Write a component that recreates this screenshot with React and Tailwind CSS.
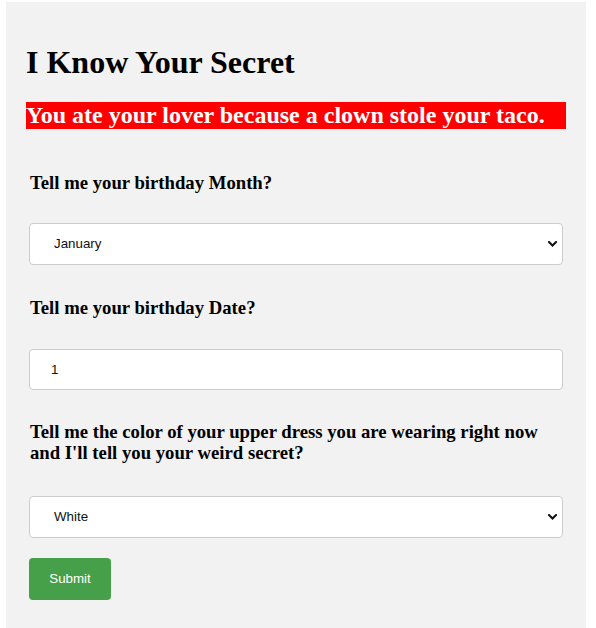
import { useState } from 'react';

const serif = { fontFamily: '"Liberation Serif", "Times New Roman", serif' };

const Chevron = () => (
    <svg className="pointer-events-none absolute right-[6px] top-1/2 -translate-y-1/2 w-[9px] h-[6px]" viewBox="0 0 9 6" fill="none">
        <path d="M1 1l3.5 3.5L8 1" stroke="#111" strokeWidth="2" strokeLinecap="square" />
    </svg>
);

const SelectBox = ({ value, onChange, options }) => (
    <div className="relative mx-[3px]">
        <select
            value={value}
            onChange={e => onChange(e.target.value)}
            className="appearance-none block w-full h-[42px] pl-[24px] pr-8 bg-white border border-[#cccccc] rounded-[4px] text-[13.33px] text-[#111] font-['Liberation_Sans',Arial,sans-serif] outline-none"
        >
            {options.map(o => <option key={o} value={o}>{o}</option>)}
        </select>
        <Chevron />
    </div>
);

const months = ['January', 'February', 'March', 'April', 'May', 'June', 'July', 'August', 'September', 'October', 'November', 'December'];
const colors = ['White', 'Black', 'Red', 'Blue', 'Green', 'Yellow', 'Gray'];

export default function App() {
    const [month, setMonth] = useState('January');
    const [date, setDate] = useState('1');
    const [color, setColor] = useState('White');

    return (
        <div className="pt-[2px] pl-[6px] bg-white">
            <div className="w-[580px] h-[626px] bg-[#f2f2f2] px-5 pt-5" style={serif}>
                <h1 className="mt-[21.5px] text-[32px] leading-[36.8px] font-bold text-black">I Know Your Secret</h1>
                <h2 className="mt-[21.5px] bg-[#ff0000] text-white text-[24px] leading-[27.6px] font-bold">
                    You ate your lover because a clown stole your taco.
                </h2>

                <form onSubmit={e => e.preventDefault()}>
                    <label className="block mt-[43px] ml-[4px] text-[18.72px] leading-[21.5px] font-bold text-black">
                        Tell me your birthday Month?
                    </label>
                    <div className="mt-[29.5px]">
                        <SelectBox value={month} onChange={setMonth} options={months} />
                    </div>

                    <label className="block mt-[32px] ml-[4px] text-[18.72px] leading-[21.5px] font-bold text-black">
                        Tell me your birthday Date?
                    </label>
                    <div className="mt-[30px] mx-[3px]">
                        <input
                            type="text"
                            value={date}
                            onChange={e => setDate(e.target.value)}
                            className="block w-full h-[41px] pl-[21px] bg-white border border-[#cccccc] rounded-[4px] text-[13.33px] text-[#111] font-['Liberation_Sans',Arial,sans-serif] outline-none"
                        />
                    </div>

                    <label className="block mt-[31px] ml-[4px] text-[18.72px] leading-[21.5px] font-bold text-black">
                        Tell me the color of your upper dress you are wearing right now and I'll tell you your weird secret?
                    </label>
                    <div className="mt-[32px]">
                        <SelectBox value={color} onChange={setColor} options={colors} />
                    </div>

                    <button
                        type="submit"
                        className="mt-[20px] ml-[3px] w-[82px] h-[42px] bg-[#45a049] text-white rounded-[4px] text-[13.33px] font-['Liberation_Sans',Arial,sans-serif]"
                    >
                        Submit
                    </button>
                </form>
            </div>
        </div>
    );
}
